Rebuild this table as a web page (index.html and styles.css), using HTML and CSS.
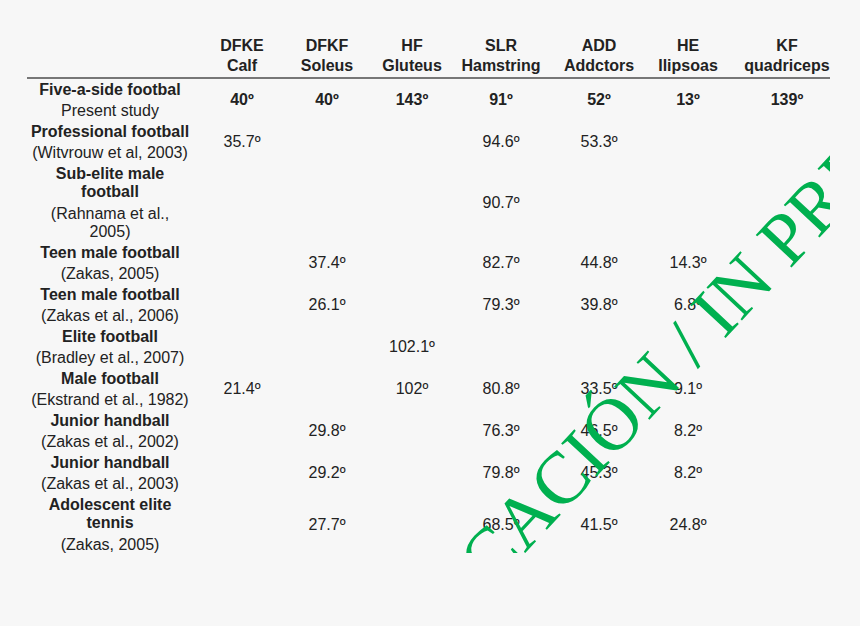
FILE: index.html
```html
<!DOCTYPE html>
<html lang="en">
<head>
<meta charset="utf-8">
<title>Flexibility comparison table</title>
<link rel="stylesheet" href="styles.css">
</head>
<body>
<div class="frame">
  <table class="data">
    <colgroup>
      <col class="c-label">
      <col class="c-dfke">
      <col class="c-dfkf">
      <col class="c-hf">
      <col class="c-slr">
      <col class="c-add">
      <col class="c-he">
      <col class="c-kf">
    </colgroup>
    <thead>
      <tr>
        <th></th>
        <th>DFKE<br>Calf</th>
        <th>DFKF<br>Soleus</th>
        <th>HF<br>Gluteus</th>
        <th>SLR<br>Hamstring</th>
        <th>ADD<br>Addctors</th>
        <th>HE<br>Ilipsoas</th>
        <th>KF<br>quadriceps</th>
      </tr>
    </thead>
    <tbody>
      <tr class="own">
        <td class="label"><div class="name">Five-a-side footbal</div><div class="cite">Present study</div></td>
        <td>40º</td><td>40º</td><td>143º</td><td>91º</td><td>52º</td><td>13º</td><td>139º</td>
      </tr>
      <tr>
        <td class="label"><div class="name">Professional football</div><div class="cite">(Witvrouw et al, 2003)</div></td>
        <td>35.7º</td><td></td><td></td><td>94.6º</td><td>53.3º</td><td></td><td></td>
      </tr>
      <tr>
        <td class="label"><div class="name">Sub-elite male football</div><div class="cite spaced">(Rahnama et al., 2005)</div></td>
        <td></td><td></td><td></td><td>90.7º</td><td></td><td></td><td></td>
      </tr>
      <tr>
        <td class="label"><div class="name">Teen male football</div><div class="cite">(Zakas, 2005)</div></td>
        <td></td><td>37.4º</td><td></td><td>82.7º</td><td>44.8º</td><td>14.3º</td><td></td>
      </tr>
      <tr>
        <td class="label"><div class="name">Teen male football</div><div class="cite">(Zakas et al., 2006)</div></td>
        <td></td><td>26.1º</td><td></td><td>79.3º</td><td>39.8º</td><td>6.8º</td><td></td>
      </tr>
      <tr>
        <td class="label"><div class="name">Elite football</div><div class="cite">(Bradley et al., 2007)</div></td>
        <td></td><td></td><td>102.1º</td><td></td><td></td><td></td><td></td>
      </tr>
      <tr>
        <td class="label"><div class="name">Male football</div><div class="cite">(Ekstrand et al., 1982)</div></td>
        <td>21.4º</td><td></td><td>102º</td><td>80.8º</td><td>33.5º</td><td>9.1º</td><td></td>
      </tr>
      <tr>
        <td class="label"><div class="name">Junior handball</div><div class="cite">(Zakas et al., 2002)</div></td>
        <td></td><td>29.8º</td><td></td><td>76.3º</td><td>46.5º</td><td>8.2º</td><td></td>
      </tr>
      <tr>
        <td class="label"><div class="name">Junior handball</div><div class="cite">(Zakas et al., 2003)</div></td>
        <td></td><td>29.2º</td><td></td><td>79.8º</td><td>45.3º</td><td>8.2º</td><td></td>
      </tr>
      <tr>
        <td class="label"><div class="name">Adolescent elite tennis</div><div class="cite spaced">(Zakas, 2005)</div></td>
        <td></td><td>27.7º</td><td></td><td>68.5º</td><td>41.5º</td><td>24.8º</td><td></td>
      </tr>
    </tbody>
  </table>
  <span class="stamp">PUBLICACIÓN / IN PRESS</span>
</div>
</body>
</html>
```

FILE: styles.css
```css
html, body {
  margin: 0;
  padding: 0;
  background: #f7f7f7;
}

body {
  width: 860px;
  height: 626px;
  overflow: hidden;
  font-family: "Liberation Sans", Arial, Helvetica, sans-serif;
  color: #222;
}

.frame {
  position: relative;
  width: 830px;
  height: 553px;
  overflow: hidden;
}

.data {
  table-layout: fixed;
  width: 828px;
  margin: 36px 0 0 27px;
  border-spacing: 0;
  border-collapse: separate;
  font-size: 16px;
}

.c-label { width: 166px; }
.c-dfke  { width: 98px; }
.c-dfkf  { width: 72px; }
.c-hf    { width: 98px; }
.c-slr   { width: 80px; }
.c-add   { width: 116px; }
.c-he    { width: 62px; }
.c-kf    { width: 136px; }

.data th {
  padding: 0 0 1px;
  font-weight: bold;
  line-height: 20px;
  text-align: center;
  vertical-align: bottom;
  white-space: nowrap;
  border-bottom: 2px solid #777;
}

.data td {
  padding: 2px 0;
  line-height: 17.5px;
  text-align: center;
  vertical-align: middle;
  white-space: nowrap;
}

.data td.label {
  padding: 2px 3px;
  white-space: normal;
}

.name {
  font-weight: bold;
}

.cite {
  margin-top: 3px;
}

.cite.spaced {
  margin-top: 5px;
}

.own td {
  font-weight: bold;
}

.own td.label .cite {
  font-weight: normal;
}

.stamp {
  position: absolute;
  left: 327px;
  top: 692px;
  display: block;
  white-space: nowrap;
  font-family: "Liberation Serif", "Times New Roman", serif;
  font-size: 74px;
  line-height: 74px;
  color: #00b04f;
  transform-origin: 0 50%;
  transform: rotate(-47deg);
}
```
